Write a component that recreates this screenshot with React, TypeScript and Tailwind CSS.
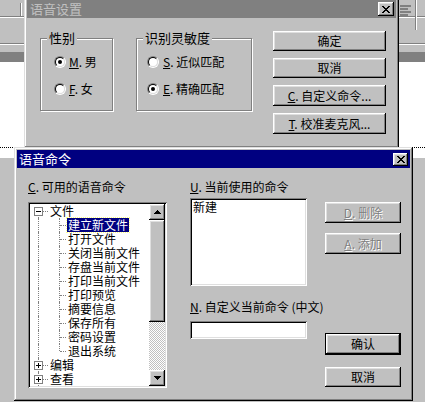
import React from "react";

const raised =
  "shadow-[inset_-1px_-1px_#000,inset_1px_1px_#fff,inset_-2px_-2px_#808080,inset_2px_2px_#dfdfdf]";
const frame =
  "shadow-[inset_-1px_-1px_#000,inset_1px_1px_#dfdfdf,inset_-2px_-2px_#808080,inset_2px_2px_#fff]";
const sunken =
  "shadow-[inset_1px_1px_#808080,inset_-1px_-1px_#fff,inset_2px_2px_#000,inset_-2px_-2px_#dfdfdf]";

function CloseBtn({ className }: { className: string }) {
  return (
    <div className={`flex items-center justify-center bg-[#c0c0c0] ${raised} ${className}`}>
      <svg width="8" height="7" viewBox="0 0 8 7" shapeRendering="crispEdges">
        <path
          d="M0 0h2v1h1v1h2v-1h1v-1h2v1h-1v1h-1v1h-1v1h1v1h1v1h1v1h-2v-1h-1v-1h-2v1h-1v1h-2v-1h1v-1h1v-1h1v-1h-1v-1h-1v-1h-1z"
          fill="#000"
        />
      </svg>
    </div>
  );
}

function Btn({
  children,
  className = "",
  disabled = false,
  isDefault = false,
}: {
  children: React.ReactNode;
  className?: string;
  disabled?: boolean;
  isDefault?: boolean;
}) {
  return (
    <div
      className={`flex items-center justify-center bg-[#c0c0c0] ${raised} ${
        isDefault ? "border border-black" : ""
      } ${disabled ? "text-[#808080] [text-shadow:1px_1px_0_#fff]" : ""} ${className}`}
    >
      {children}
    </div>
  );
}

function Radio({ checked }: { checked?: boolean }) {
  return (
    <span className="flex h-[12px] w-[12px] shrink-0 rounded-full border border-t-[#808080] border-l-[#808080] border-r-white border-b-white">
      <span className="flex h-full w-full items-center justify-center rounded-full border border-t-black border-l-black border-r-[#dfdfdf] border-b-[#dfdfdf] bg-white">
        {checked && <span className="h-[4px] w-[4px] rounded-full bg-black" />}
      </span>
    </span>
  );
}

function Arrow({ up }: { up?: boolean }) {
  return (
    <svg width="7" height="4" viewBox="0 0 7 4" shapeRendering="crispEdges">
      <path d={up ? "M3 0h1v1h1v1h1v1h1v1h-7v-1h1v-1h1v-1h1z" : "M0 0h7v1h-1v1h-1v1h-1v1h-1v-1h-1v-1h-1v-1h-1z"} fill="#000" />
    </svg>
  );
}

function ExpandBox({ open }: { open?: boolean }) {
  return (
    <span className="relative ml-[4px] flex h-[9px] w-[9px] items-center justify-center border border-[#808080] bg-white">
      <span className="h-px w-[5px] bg-black" />
      {!open && <span className="absolute left-[3px] top-[1px] h-[5px] w-px bg-black" />}
    </span>
  );
}

const children = [
  "建立新文件",
  "打开文件",
  "关闭当前文件",
  "存盘当前文件",
  "打印当前文件",
  "打印预览",
  "摘要信息",
  "保存所有",
  "密码设置",
  "退出系统",
];

function RootRow({ label, open, first }: { label: string; open?: boolean; first?: boolean }) {
  return (
    <div className="relative flex h-[14px] shrink-0 items-center">
      <span
        className={`absolute left-[8px] bottom-0 border-l border-dotted border-[#808080] ${
          first ? "top-[10px]" : "top-0"
        }`}
      />
      <ExpandBox open={open} />
      <span className="w-[5px] border-t border-dotted border-[#808080]" />
      <span className="ml-[2px]">{label}</span>
    </div>
  );
}

function Tree() {
  return (
    <div className="flex min-w-0 flex-1 flex-col overflow-hidden bg-white">
      <RootRow label="文件" open first />
      {children.map((c, i) => (
        <div key={c} className="relative flex h-[14px] shrink-0 items-center">
          <span className="absolute left-[8px] top-0 bottom-0 border-l border-dotted border-[#808080]" />
          <span
            className={`absolute left-[29px] top-0 border-l border-dotted border-[#808080] ${
              i === children.length - 1 ? "h-[7px]" : "bottom-0"
            }`}
          />
          <span className="absolute left-[30px] top-[7px] w-[6px] border-t border-dotted border-[#808080]" />
          <span
            className={`ml-[37px] px-[1px] ${
              i === 0 ? "bg-[#000080] text-white outline outline-1 outline-dotted outline-[#ffff80]" : ""
            }`}
          >
            {c}
          </span>
        </div>
      ))}
      <RootRow label="编辑" />
      <RootRow label="查看" />
    </div>
  );
}

function Scrollbar() {
  return (
    <div className="flex w-[16px] shrink-0 flex-col">
      <div className={`flex h-[16px] items-center justify-center bg-[#c0c0c0] ${raised}`}>
        <Arrow up />
      </div>
      <div className={`h-[102px] bg-[#c0c0c0] ${raised}`} />
      <div className="flex-1 bg-[image:repeating-conic-gradient(#c0c0c0_0%_25%,#fff_0%_50%)] bg-[length:2px_2px]" />
      <div className={`flex h-[16px] items-center justify-center bg-[#c0c0c0] ${raised}`}>
        <Arrow />
      </div>
    </div>
  );
}

export default function App() {
  return (
    <div className="relative h-[402px] w-[425px] overflow-hidden bg-[#c0c0c0] font-['Noto_Sans_CJK_SC',sans-serif] text-[12px] leading-[14px] text-black">
      {/* application behind the dialogs */}
      <div className="flex flex-col">
        <div className="relative h-[17px] border-b border-[#808080]">
          <span className="absolute left-[20px] top-[3px] h-[13px] w-[2px] border-l border-[#808080] bg-white" />
          <svg className="absolute left-[400px] top-[5px]" width="12" height="14" viewBox="0 0 12 14">
            <path d="M0 1h11M0 4h8M0 7h11M0 10h8" stroke="#404040" strokeWidth="1" />
          </svg>
          <span className="absolute left-[415px] top-0 h-[30px] w-[2px] border-l border-[#808080] bg-white" />
        </div>
        <div className="h-[27px] border-t border-white border-b border-b-[#808080]" />
        <div className="h-[8px] border-t border-white" />
        <div className="h-[10px] bg-[#808080]" />
        <div className="h-[85px] bg-white" />
        <div className="border-t border-dotted border-black bg-white" />
        <div className="h-[10px] bg-white" />
      </div>

      {/* 语音设置 (inactive) */}
      <div className={`absolute left-[24px] top-[-3px] flex h-[151px] w-[375px] flex-col bg-[#c0c0c0] p-[3px] ${frame}`}>
        <div className="flex h-[18px] shrink-0 items-center justify-between bg-[#808080] pl-[3px] pr-[2px] text-[13px] text-[#c0c0c0]">
          <span>语音设置</span>
          <CloseBtn className="h-[14px] w-[16px]" />
        </div>
        <div className="flex pl-[13px]">
          <div className="relative mt-[20px] flex h-[73px] w-[73px] flex-col gap-[13px] border border-[#808080] pl-[13px] pt-[16px] shadow-[inset_1px_1px_#fff,1px_1px_#fff]">
            <span className="absolute -top-[8px] left-[6px] bg-[#c0c0c0] px-[2px] text-[13px]">性别</span>
            <div className="flex h-[14px] items-center gap-[3px]">
              <Radio checked />
              <span>
                <u>M</u>. 男
              </span>
            </div>
            <div className="flex h-[14px] items-center gap-[3px]">
              <Radio />
              <span>
                <u>F</u>. 女
              </span>
            </div>
          </div>
          <div className="relative ml-[23px] mt-[20px] flex h-[73px] w-[116px] flex-col gap-[13px] border border-[#808080] pl-[10px] pt-[16px] shadow-[inset_1px_1px_#fff,1px_1px_#fff]">
            <span className="absolute -top-[8px] left-[6px] bg-[#c0c0c0] px-[2px] text-[13px]">识别灵敏度</span>
            <div className="flex h-[14px] items-center gap-[4px]">
              <Radio />
              <span>
                <u>S</u>. 近似匹配
              </span>
            </div>
            <div className="flex h-[14px] items-center gap-[4px]">
              <Radio checked />
              <span>
                <u>E</u>. 精确匹配
              </span>
            </div>
          </div>
          <div className="ml-[21px] mt-[13px] flex w-[113px] flex-col gap-[7px]">
            <Btn className="h-[20px]">确定</Btn>
            <Btn className="h-[20px]">取消</Btn>
            <Btn className="h-[21px]">
              <span>
                <u>C</u>. 自定义命令...
              </span>
            </Btn>
            <Btn className="h-[21px]">
              <span>
                <u>T</u>. 校准麦克风...
              </span>
            </Btn>
          </div>
        </div>
      </div>

      {/* 语音命令 (active) */}
      <div className={`absolute left-[14px] top-[147px] flex h-[254px] w-[399px] flex-col bg-[#c0c0c0] p-[3px] ${frame}`}>
        <div className="flex h-[18px] shrink-0 items-center justify-between bg-[#000080] pl-[2px] pr-[2px] text-[13px] text-white">
          <span>语音命令</span>
          <CloseBtn className="h-[13px] w-[15px]" />
        </div>
        <div className="flex pl-[11px]">
          <div className="flex w-[139px] flex-col">
            <span className="mt-[12px]">
              <u>C</u>. 可用的语音命令
            </span>
            <div className={`mt-[8px] flex h-[186px] bg-white p-[2px] ${sunken}`}>
              <Tree />
              <Scrollbar />
            </div>
          </div>
          <div className="ml-[23px] flex w-[117px] flex-col">
            <span className="mt-[12px]">
              <u>U</u>. 当前使用的命令
            </span>
            <div className={`mt-[4px] h-[88px] bg-white px-[3px] py-[2px] ${sunken}`}>新建</div>
            <span className="mt-[14px] whitespace-nowrap">
              <u>N</u>. 自定义当前命令 (中文)
            </span>
            <div className={`mt-[7px] h-[18px] bg-white ${sunken}`} />
          </div>
          <div className="ml-[18px] flex w-[76px] flex-col">
            <Btn disabled className="mt-[34px] h-[21px]">
              <span>
                <u>D</u>. 删除
              </span>
            </Btn>
            <Btn disabled className="mt-[10px] h-[21px]">
              <span>
                <u>A</u>. 添加
              </span>
            </Btn>
            <Btn isDefault className="mt-[79px] h-[22px]">
              确认
            </Btn>
            <Btn className="mt-[12px] h-[20px]">取消</Btn>
          </div>
        </div>
      </div>
    </div>
  );
}
